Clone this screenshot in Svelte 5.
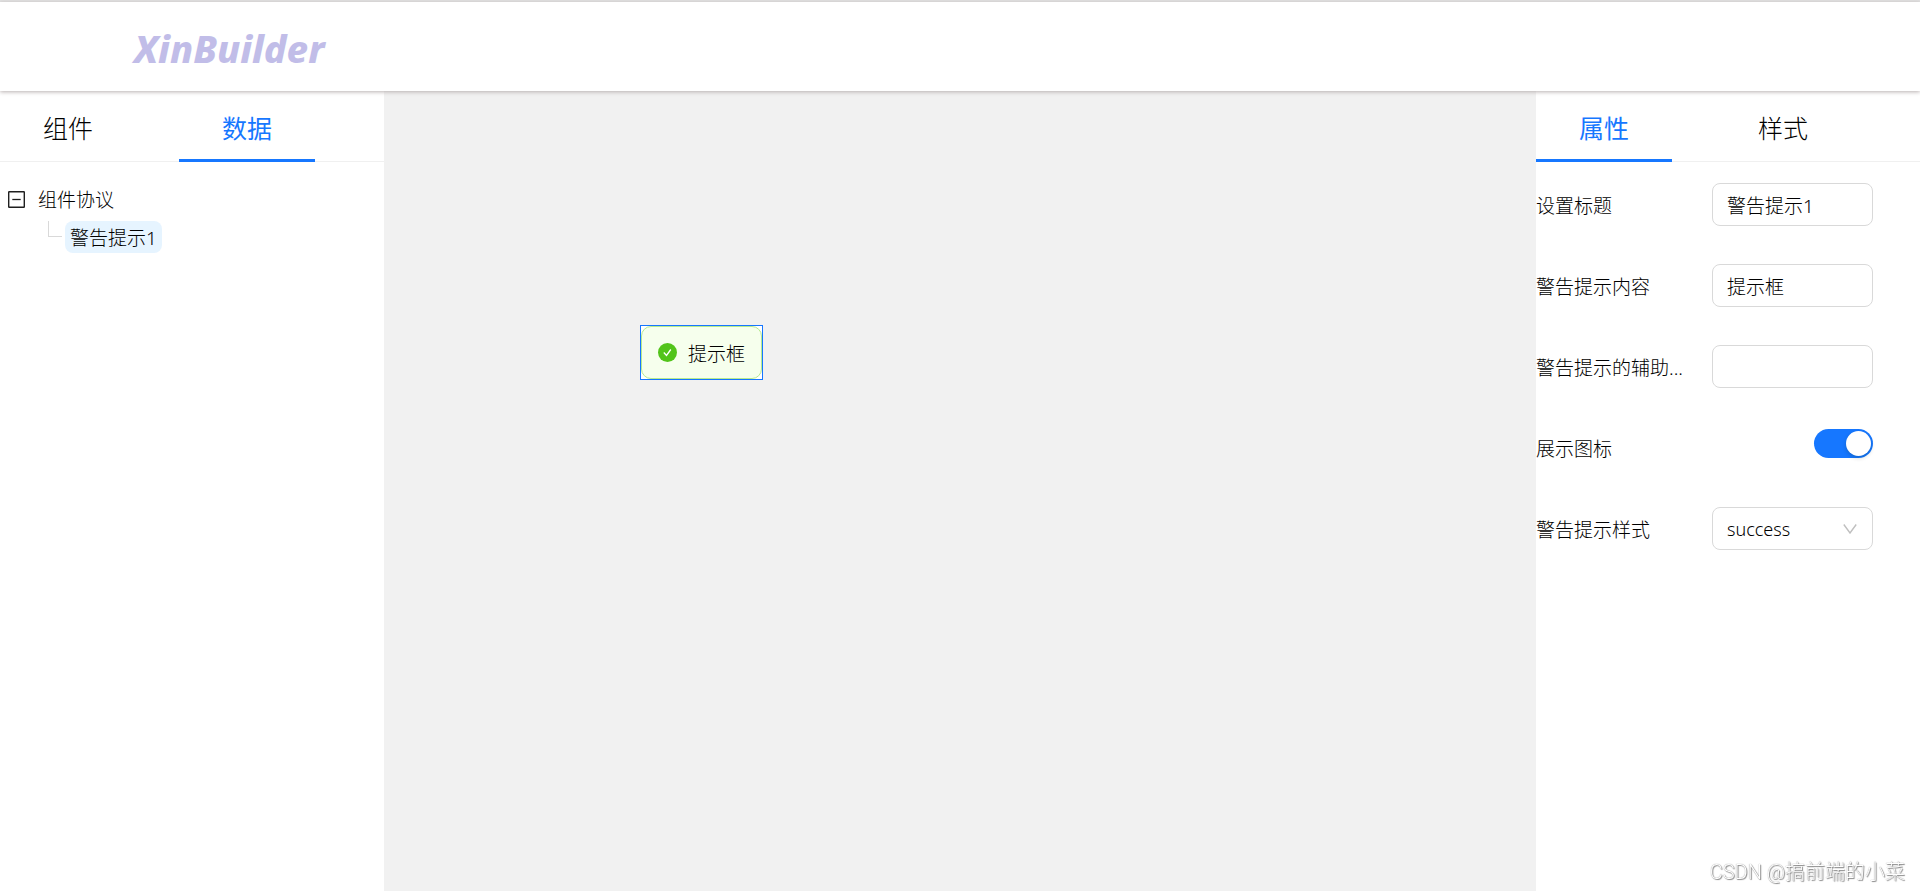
<script>
  const leftTabs = ["组件", "数据"];
  const rightTabs = ["属性", "样式"];
  const styles = ["success", "info", "warning", "error"];

  let leftActive = $state("数据");
  let rightActive = $state("属性");
  let expanded = $state(true);

  let title = $state("警告提示1");
  let message = $state("提示框");
  let description = $state("");
  let showIcon = $state(true);
  let type = $state("success");
</script>

{#snippet tabs(items, active, select)}
  <div class="tabs" role="tablist">
    {#each items as item}
      <button
        type="button"
        role="tab"
        class="tab"
        class:active={item === active}
        aria-selected={item === active}
        onclick={() => select(item)}>{item}</button>
    {/each}
  </div>
{/snippet}

<div class="page">
  <header>
    <h1>XinBuilder</h1>
  </header>

  <div class="builder">
    <aside>
      {@render tabs(leftTabs, leftActive, item => (leftActive = item))}
      <div class="tree">
        <div class="tree-row">
          <button
            type="button"
            class="toggle"
            aria-label="组件协议"
            aria-expanded={expanded}
            onclick={() => (expanded = !expanded)}>
            <svg viewBox="0 0 17 17" width="17" height="17">
              <rect x="0.7" y="0.7" width="15.6" height="15.6" rx="0.5" fill="none" stroke="#1f1f1f" stroke-width="1.4" />
              <path d="M4.300 8.500h8.400" stroke="#1f1f1f" stroke-width="1.300" />
            </svg>
          </button>
          <span>组件协议</span>
        </div>
        {#if expanded}
          <div class="tree-row child">
            <span class="branch"></span>
            <button type="button" class="node">{title}</button>
          </div>
        {/if}
      </div>
    </aside>

    <main>
      <div class="selected">
        <div class="alert" role="alert">
          {#if showIcon}
            <svg viewBox="0 0 19 19" width="19" height="19">
              <circle cx="9.5" cy="9.5" r="9.5" fill="#52c41a" />
              <path d="M5.800 9.500l2.700 3 4.300-6" fill="none" stroke="#fff" stroke-width="1.300" />
            </svg>
          {/if}
          <span>{message}</span>
        </div>
      </div>
    </main>

    <aside>
      {@render tabs(rightTabs, rightActive, item => (rightActive = item))}
      <form class="props">
        <div class="field">
          <label for="title">设置标题</label>
          <input id="title" type="text" bind:value={title} />
        </div>
        <div class="field">
          <label for="message">警告提示内容</label>
          <input id="message" type="text" bind:value={message} />
        </div>
        <div class="field">
          <label for="description">警告提示的辅助...</label>
          <input id="description" type="text" bind:value={description} />
        </div>
        <div class="field">
          <label for="show-icon">展示图标</label>
          <input id="show-icon" class="switch" type="checkbox" role="switch" bind:checked={showIcon} />
        </div>
        <div class="field">
          <label for="type">警告提示样式</label>
          <div class="select">
            <select id="type" bind:value={type}>
              {#each styles as style}
                <option value={style}>{style}</option>
              {/each}
            </select>
            <svg viewBox="0 0 14 10" width="14" height="10">
              <path d="M0.800 0.500L7 9l6.200-8.500" fill="none" stroke="#bfbfbf" stroke-width="1.400" />
            </svg>
          </div>
        </div>
      </form>
    </aside>
  </div>

  <div class="watermark">CSDN @搞前端的小菜</div>
</div>

<style>
  :global(body) {
    margin: 0;
  }
  .page {
    display: flex;
    flex-direction: column;
    min-height: 100vh;
    box-sizing: border-box;
    border-top: 2px solid #e1e1e1;
    font-family: "Noto Sans", "Noto Sans CJK SC", sans-serif;
    font-size: 19px;
    font-weight: 300;
    color: #000;
  }
  button,
  input,
  select {
    box-sizing: border-box;
    margin: 0;
    font: inherit;
    color: inherit;
  }
  button {
    padding: 0;
    border: 0;
    background: none;
    cursor: pointer;
  }
  header {
    position: relative;
    z-index: 1;
    display: flex;
    align-items: center;
    height: 89px;
    padding: 0 134px;
    background: #fff;
    box-shadow: 0 1px 4px #b8b0b0;
  }
  h1 {
    margin: 0;
    padding-top: 2px;
    font-size: 38px;
    font-style: italic;
    font-weight: 800;
    line-height: 52px;
    color: #c1bde8;
  }
  .builder {
    display: flex;
    flex: 1;
  }
  aside {
    flex: 0 0 20%;
    min-width: 0;
    background: #fff;
  }
  main {
    position: relative;
    flex: 1;
    background: #f1f1f1;
  }
  .tabs {
    display: flex;
    gap: 43px;
    height: 70px;
    border-bottom: 1px solid #f0f0f0;
  }
  .tab {
    height: 71px;
    padding: 3px 43px 0;
    border-bottom: 3px solid transparent;
    font-size: 25px;
  }
  .tab.active {
    border-color: #1677ff;
    font-weight: 400;
    color: #1677ff;
  }
  .tree {
    padding: 21px 8px;
  }
  .tree-row {
    display: flex;
    align-items: center;
    gap: 13px;
    height: 32px;
    margin-bottom: 6px;
  }
  .toggle {
    display: flex;
  }
  .child {
    gap: 3px;
    padding-left: 40px;
  }
  .branch {
    align-self: flex-start;
    width: 13px;
    height: 15px;
    border: solid #d9d9d9;
    border-width: 0 0 1px 1px;
  }
  .node {
    height: 32px;
    padding: 0 5px;
    border-radius: 8px;
    background: #e6f4ff;
  }
  /* dropped component, placed freely on the canvas */
  .selected {
    position: absolute;
    top: 234px;
    left: 256px;
    border: 1px solid #1677ff;
    background: #fff;
  }
  .alert {
    display: flex;
    align-items: center;
    gap: 11px;
    height: 51px;
    padding: 0 16px;
    border: 1px solid #b7eb8f;
    border-radius: 10px;
    background: #f6ffed;
  }
  .props {
    display: flex;
    flex-direction: column;
    gap: 38px;
    padding: 21px 47px 21px 0;
  }
  .field {
    display: grid;
    grid-template-columns: 176px 1fr;
    height: 43px;
  }
  label {
    line-height: 46px;
    white-space: nowrap;
  }
  input[type="text"],
  select {
    width: 100%;
    height: 43px;
    padding: 0 14px;
    border: 1px solid #d9d9d9;
    border-radius: 8px;
    background: #fff;
  }
  .switch {
    display: flex;
    justify-content: flex-end;
    justify-self: end;
    appearance: none;
    width: 59px;
    height: 29px;
    margin-top: 3px;
    padding: 2px;
    border-radius: 15px;
    background: #bfbfbf;
  }
  .switch::before {
    content: "";
    width: 25px;
    height: 25px;
    margin-right: auto;
    border-radius: 50%;
    background: #fff;
    box-shadow: 0 2px 4px rgba(0, 35, 11, 0.2);
  }
  .switch:checked {
    background: #1677ff;
  }
  .switch:checked::before {
    margin-right: 0;
  }
  .select {
    position: relative;
  }
  select {
    appearance: none;
    font-size: 18px;
  }
  .select svg {
    position: absolute;
    top: 17px;
    right: 16px;
    pointer-events: none;
  }
  .watermark {
    position: fixed;
    right: 15px;
    bottom: 4px;
    font-family: Roboto, "Noto Sans CJK SC", sans-serif;
    font-size: 20px;
    line-height: 29px;
    color: #fff;
    text-shadow: 0 0 1px #777, 1px 1px 1px #888;
  }
</style>
